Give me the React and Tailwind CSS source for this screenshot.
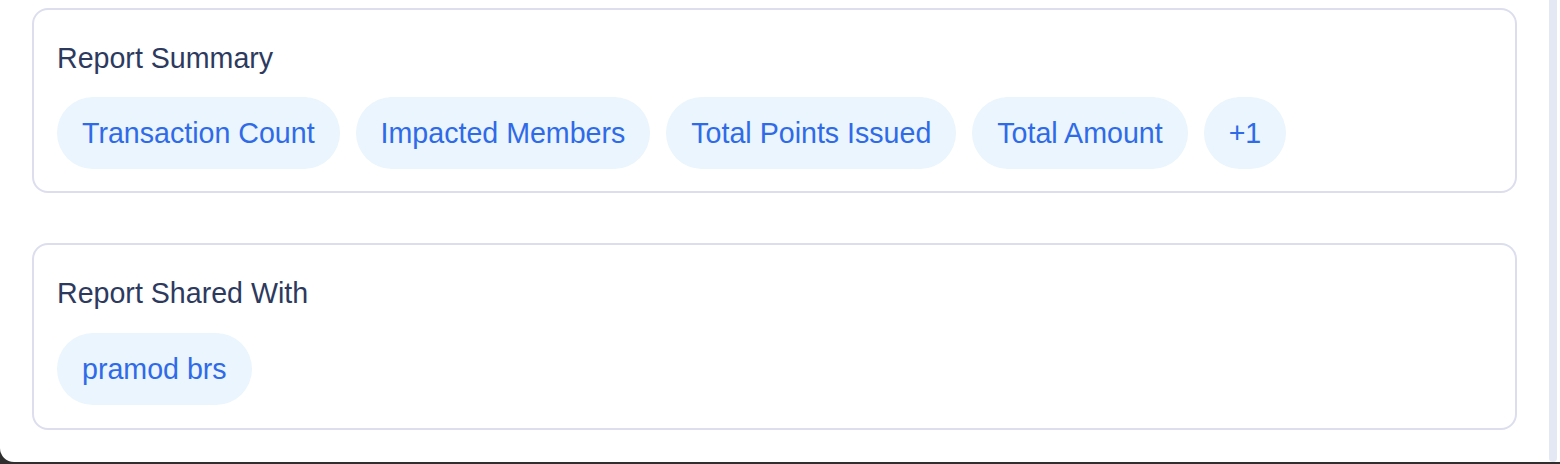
import React from 'react';

const font = { fontFamily: '"Liberation Sans", Arial, sans-serif' };

const Chip = ({ children }) => (
  <span className="inline-flex items-center rounded-full bg-[#eaf5fd] px-[25px] py-[20px] text-[28.6px] leading-[32px] text-[#2f6ae8]">
    {children}
  </span>
);

const Section = ({ title, items, top, bottom }) => (
  <div className="rounded-[16px] border-2 border-[#dcdeee] bg-white px-[23px] pt-[32px]" style={{ paddingBottom: bottom }}>
    <h2 className="text-[28.6px] font-normal leading-[32px] text-[#2d3a5e]">{title}</h2>
    <div className="flex flex-wrap gap-x-[16px] gap-y-3" style={{ marginTop: top }}>
      {items.map(item => (
        <Chip key={item}>{item}</Chip>
      ))}
    </div>
  </div>
);

export default function App() {
  return (
    <div className="h-[464px] w-[1560px] bg-[#2f2f2f]" style={font}>
      <div className="flex h-[462px] rounded-bl-[14px] bg-white">
        {/* Content */}
        <div className="flex flex-1 flex-col gap-[50px] pl-[32px] pr-[32px] pt-[8px]">
          <Section
            title="Report Summary"
            items={['Transaction Count', 'Impacted Members', 'Total Points Issued', 'Total Amount', '+1']}
            top={23}
            bottom={22}
          />
          <Section title="Report Shared With" items={['pramod brs']} top={24} bottom={23} />
        </div>

        {/* Scrollbar track */}
        <div className="mr-[3px] w-[8px] rounded-b-[4px] bg-[#e3e8f4]" />
      </div>
    </div>
  );
}
